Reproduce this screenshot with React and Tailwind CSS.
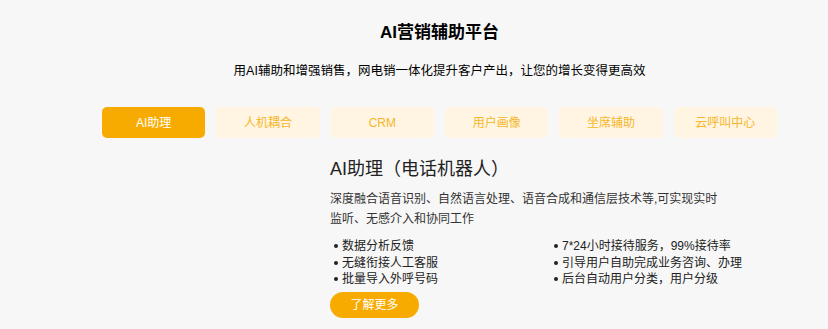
import React, { useState } from 'react';

const tabs = ['AI助理', '人机耦合', 'CRM', '用户画像', '坐席辅助', '云呼叫中心'];

const leftItems = ['数据分析反馈', '无缝衔接人工客服', '批量导入外呼号码'];
const rightItems = ['7*24小时接待服务，99%接待率', '引导用户自助完成业务咨询、办理', '后台自动用户分类，用户分级'];

const Bullet = ({ text }) => (
  <li className="flex items-center h-[16.5px] whitespace-nowrap">
    <span className="w-[4px] h-[4px] rounded-full bg-[#222] mr-[4px] ml-[4px] shrink-0"></span>
    <span>{text}</span>
  </li>
);

const App = () => {
  const [active, setActive] = useState(0);

  return (
    <div
      className="w-[828px] h-[329px] bg-[#f7f7f7] text-[#222] overflow-hidden"
      style={{ fontFamily: '"Liberation Sans", "Noto Sans CJK SC", sans-serif' }}
    >
      <div className="ml-[102px] w-[675px] flex flex-col items-center">
        <h1 className="mt-[22px] text-[17px] leading-[22px] font-bold text-black">AI营销辅助平台</h1>
        <p className="mt-[19px] text-[12.5px] leading-[16px] text-black">
          用AI辅助和增强销售，网电销一体化提升客户产出，让您的增长变得更高效
        </p>

        {/* tabs */}
        <div className="mt-[28px] w-full flex gap-[11px]">
          {tabs.map((t, i) => (
            <button
              key={t}
              onClick={() => setActive(i)}
              className={
                i === active
                  ? 'w-[104px] h-[31px] rounded-[5px] bg-[#f7ab00] text-white text-[12px]'
                  : 'w-[104px] h-[31px] rounded-[5px] bg-[#fff5e2] text-[#f5b72b] text-[12px]'
              }
            >
              {t}
            </button>
          ))}
        </div>
      </div>

      <div className="ml-[330px] w-[392px] mt-[19px]">
        <h2 className="text-[18px] leading-[24px] text-[#222]">AI助理（电话机器人）</h2>
        <p className="mt-[8px] text-[12px] leading-[20px] text-[#333]">
          深度融合语音识别、自然语言处理、语音合成和通信层技术等,可实现实时监听、无感介入和协同工作
        </p>
        <div className="mt-[9px] grid grid-cols-[220px_1fr] text-[12px] text-[#222]">
          <ul>
            {leftItems.map((t) => (
              <Bullet key={t} text={t} />
            ))}
          </ul>
          <ul>
            {rightItems.map((t) => (
              <Bullet key={t} text={t} />
            ))}
          </ul>
        </div>
        <button className="mt-[4px] w-[89px] h-[26px] rounded-full bg-[#f7ab00] text-white text-[12px]">
          了解更多
        </button>
      </div>
    </div>
  );
};

export default App;
